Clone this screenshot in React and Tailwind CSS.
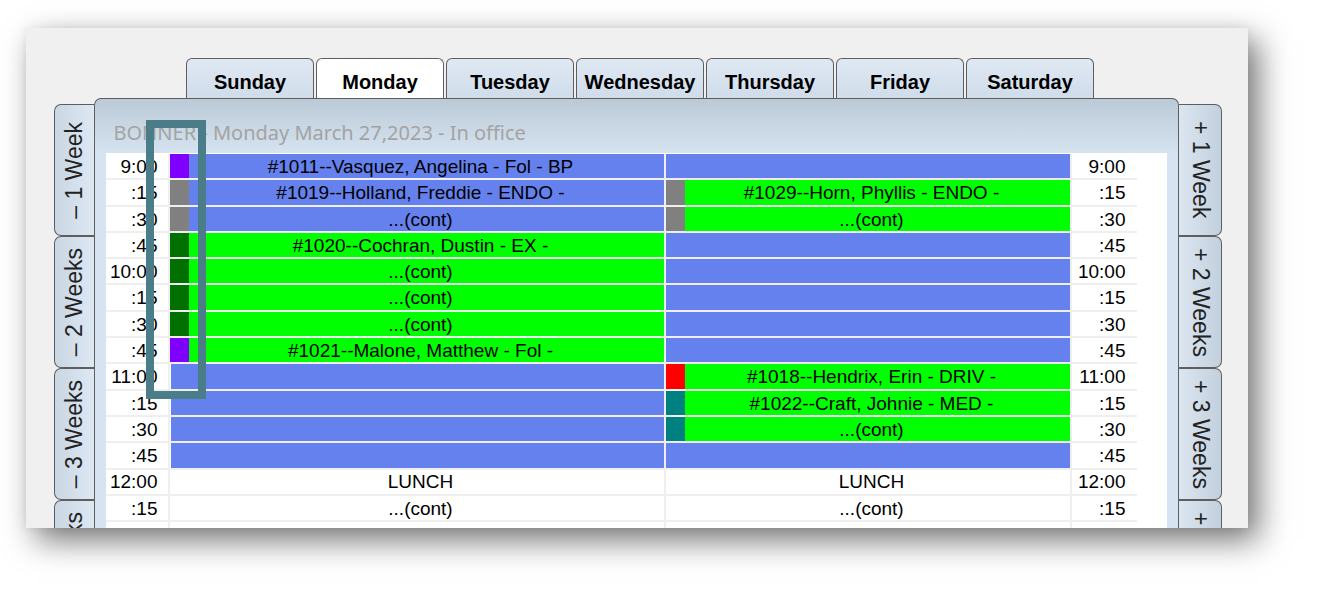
const BLUE = 'bg-[#6581ee]'
const GREEN = 'bg-[#00ff00]'
const WHITE = 'bg-white'

const rows = [
  { t: '9:00', a: { m: 'bg-[#8000ff]', c: BLUE, x: '#1011--Vasquez, Angelina - Fol - BP' }, b: { c: BLUE } },
  { t: ':15', a: { m: 'bg-[#808080]', c: BLUE, x: '#1019--Holland, Freddie - ENDO -' }, b: { m: 'bg-[#808080]', c: GREEN, x: '#1029--Horn, Phyllis - ENDO -' } },
  { t: ':30', a: { m: 'bg-[#808080]', c: BLUE, x: '...(cont)' }, b: { m: 'bg-[#808080]', c: GREEN, x: '...(cont)' } },
  { t: ':45', a: { m: 'bg-[#007000]', c: GREEN, x: '#1020--Cochran, Dustin - EX -' }, b: { c: BLUE } },
  { t: '10:00', a: { m: 'bg-[#007000]', c: GREEN, x: '...(cont)' }, b: { c: BLUE } },
  { t: ':15', a: { m: 'bg-[#007000]', c: GREEN, x: '...(cont)' }, b: { c: BLUE } },
  { t: ':30', a: { m: 'bg-[#007000]', c: GREEN, x: '...(cont)' }, b: { c: BLUE } },
  { t: ':45', a: { m: 'bg-[#8000ff]', c: GREEN, x: '#1021--Malone, Matthew - Fol -' }, b: { c: BLUE } },
  { t: '11:00', a: { c: BLUE, inset: true }, b: { m: 'bg-[#ff0000]', c: GREEN, x: '#1018--Hendrix, Erin - DRIV -' } },
  { t: ':15', a: { c: BLUE, inset: true }, b: { m: 'bg-[#008080]', c: GREEN, x: '#1022--Craft, Johnie - MED -' } },
  { t: ':30', a: { c: BLUE, inset: true }, b: { m: 'bg-[#008080]', c: GREEN, x: '...(cont)' } },
  { t: ':45', a: { c: BLUE, inset: true }, b: { c: BLUE } },
  { t: '12:00', a: { c: WHITE, x: 'LUNCH' }, b: { c: WHITE, x: 'LUNCH' } },
  { t: ':15', a: { c: WHITE, x: '...(cont)' }, b: { c: WHITE, x: '...(cont)' } },
  { t: ':30', a: { c: WHITE }, b: { c: WHITE } },
]

const days = ['Sunday', 'Monday', 'Tuesday', 'Wednesday', 'Thursday', 'Friday', 'Saturday']

function Cell({ m, c, x, inset }) {
  return (
    <div className={`flex h-full ${c} ${inset ? 'border-l-[1.5px] border-white' : ''}`}>
      {m && <div className={`w-[19px] shrink-0 ${m}`} />}
      <div className={`flex-1 flex items-center justify-center whitespace-nowrap pt-[2px] ${m ? 'pr-[11px]' : 'pl-[8px]'}`}>{x}</div>
    </div>
  )
}

function SideTab({ label, side }) {
  const left = side === 'left'
  return (
    <div className={`h-[132px] flex items-center justify-center border-[#5e5e5e] border-[1.5px] ${left ? 'rounded-l-[7px] border-r-0 bg-[linear-gradient(to_right,#c9d6e3,#dde8f3)]' : 'rounded-r-[7px] border-l-0 bg-[linear-gradient(to_right,#dbe6f1,#c3d0dd)]'}`}>
      <span className={`[writing-mode:vertical-rl] whitespace-nowrap text-[23px] leading-none text-[#222] ${left ? 'rotate-180' : ''}`}>{label}</span>
    </div>
  )
}

export default function App() {
  return (
    <div className="w-[1324px] h-[592px] bg-white overflow-hidden font-['Liberation_Sans',Arial,sans-serif]">
      <div className="relative ml-[26px] mt-[28px] w-[1222px] h-[500px] bg-[#f0f0f0] overflow-hidden shadow-[10px_12px_30px_rgba(0,0,0,0.55),0_0_10px_rgba(0,0,0,0.06)]">
        <div className="pt-[30px]">
          <div className="flex gap-[2px] ml-[160px]">
            {days.map(d => (
              <div key={d} className={`w-[128px] h-[40px] flex items-center justify-center pt-[6px] border-[1.5px] border-b-0 border-[#5e5e5e] rounded-t-[6px] text-[20px] font-bold text-black ${d === 'Monday' ? 'bg-white' : 'bg-[linear-gradient(to_bottom,#dfe9f4,#cfdce9)]'}`}>
                {d}
              </div>
            ))}
          </div>

          <div className="flex items-start ml-[28px]">
            <div className="w-[40px] mt-[6px] flex flex-col">
              {['– 1 Week', '– 2 Weeks', '– 3 Weeks', '– 4 Weeks'].map(l => <SideTab key={l} label={l} side="left" />)}
            </div>

            <div className="w-[1085px] h-[440px] border-[1.5px] border-b-0 border-[#5e5e5e] rounded-t-[7px] bg-[linear-gradient(to_bottom,#bccad8,#d6e3f0_55px)] pl-[10.5px] pr-[11.5px]">
              <div className="h-[54px] pt-[21px] pl-[8px] font-['Noto_Sans',sans-serif] text-[20px] leading-[26px] text-[#a3a3a3] whitespace-nowrap">
                BONNER - Monday March 27,2023 - In office
              </div>
              <div className="flex bg-white pt-px">
                <div className="grid grid-cols-[62px_494px_404px_65px] auto-rows-[24.3px] gap-[2px] bg-[#efefef] text-[19px] text-black">
                  {rows.map((r, i) => [
                    <div key={i + 't'} className="bg-white flex items-center justify-end pt-[2px] pr-[10px]">{r.t}</div>,
                    <Cell key={i + 'a'} {...r.a} />,
                    <Cell key={i + 'b'} {...r.b} />,
                    <div key={i + 'r'} className="bg-white flex items-center justify-end pt-[2px] pr-[11px]">{r.t}</div>,
                  ])}
                </div>
                <div className="flex-1 bg-white" />
              </div>
            </div>

            <div className="w-[43px] mt-[6px] flex flex-col">
              {['+ 1 Week', '+ 2 Weeks', '+ 3 Weeks', '+ 4 Weeks'].map(l => <SideTab key={l} label={l} side="right" />)}
            </div>
          </div>
        </div>

        {/* annotation box */}
        <div className="absolute left-[120px] top-[92px] w-[60px] h-[279px] border-[8px] border-[#4b7d89]" />
      </div>
    </div>
  )
}
